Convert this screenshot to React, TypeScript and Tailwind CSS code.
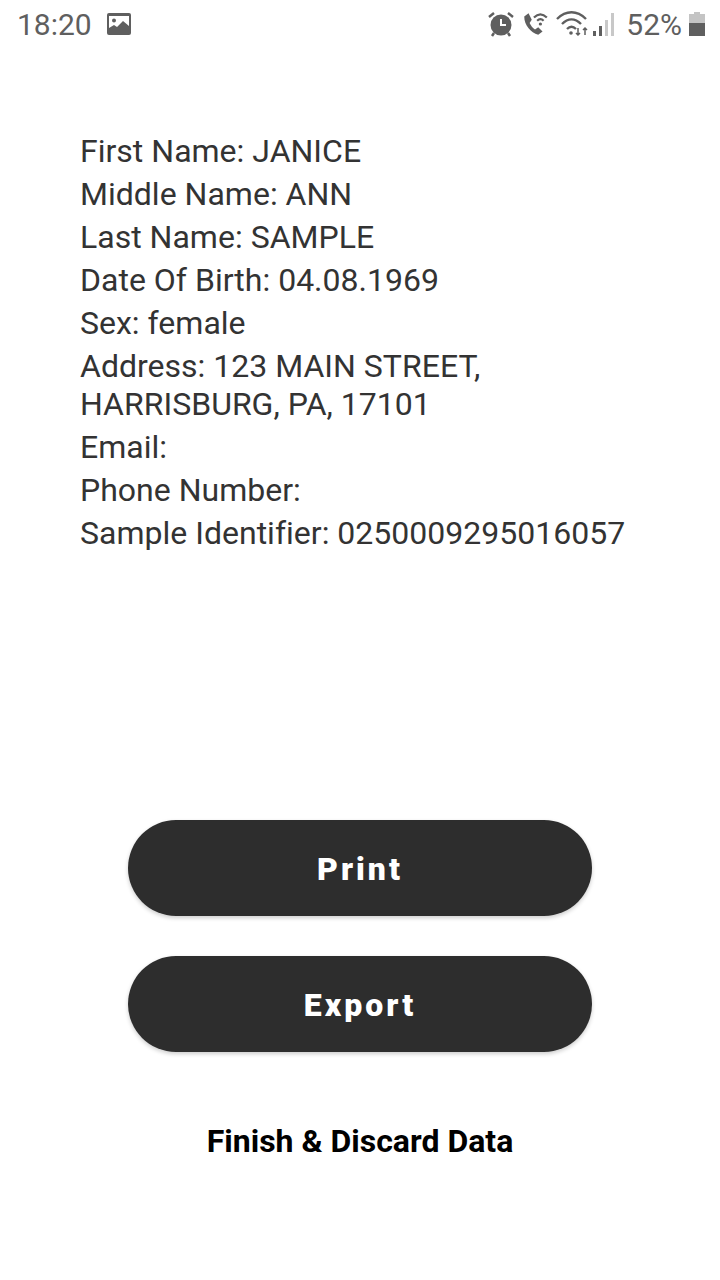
const fields = [
  "First Name: JANICE",
  "Middle Name: ANN",
  "Last Name: SAMPLE",
  "Date Of Birth: 04.08.1969",
  "Sex: female",
  "Address: 123 MAIN STREET, HARRISBURG, PA, 17101",
  "Email:",
  "Phone Number:",
  "Sample Identifier: 0250009295016057",
];

function StatusBar() {
  return (
    <div className="flex h-[50px] items-center justify-between pb-[2px] pl-[17px] pr-[15px] text-[30px] text-[#5f5f5f]">
      <div className="flex items-center gap-[15px]">
        <span>18:20</span>
        <svg width="24" height="22" viewBox="0 0 24 22">
          <rect width="24" height="22" rx="2" fill="#5f5f5f" />
          <rect x="2" y="3" width="20" height="16" fill="#fff" />
          <circle cx="7" cy="7.5" r="2" fill="#5f5f5f" />
          <path d="M2 19v-4l5-3 3 2 6-6 6 5v6z" fill="#5f5f5f" />
        </svg>
      </div>
      <div className="flex items-center">
        <svg width="28" height="26" viewBox="0 0 28 26" className="mr-[6px]" fill="#5f5f5f">
          <circle cx="14" cy="14" r="10.5" />
          <path d="M14 8v6h5" stroke="#fff" strokeWidth="2" fill="none" />
          <path d="M2 6l5-4M26 6l-5-4M7 22l-2 3M21 22l2 3" stroke="#5f5f5f" strokeWidth="2.5" />
        </svg>
        <svg width="28" height="26" viewBox="0 0 26 24" className="mr-[7px]" fill="none" stroke="#5f5f5f">
          <path d="M7 2l-4 3c0 8 6 15 13 17l4-3-4-4-3 2c-2-1-4-4-5-6l2-3z" fill="#5f5f5f" stroke="none" />
          <path d="M12 6c4-4 8-4 12 0M15 9c2-2 4-2 6 0" strokeWidth="2" />
          <circle cx="18" cy="12" r="1.5" fill="#5f5f5f" stroke="none" />
        </svg>
        <svg width="36" height="26" viewBox="0 0 36 26" fill="none" stroke="#5f5f5f" strokeWidth="2.4">
          <path d="M1 8c9-9 20-9 29 0M6 13c6-6 13-6 19 0M11 18c3-3 6-3 9 0" />
          <circle cx="15" cy="22" r="1.8" fill="#5f5f5f" stroke="none" />
          <path d="M22 17v7M20 22l2 2 2-2M29 24v-7M27 19l2-2 2 2" strokeWidth="1.5" />
        </svg>
        <svg width="24" height="26" viewBox="0 0 24 26" className="mr-[10px]">
          <rect x="1" y="20" width="3" height="5" fill="#5f5f5f" />
          <rect x="7" y="15" width="3" height="10" fill="#5f5f5f" />
          <rect x="13" y="9" width="3" height="16" fill="#c8c8c8" />
          <rect x="19" y="2" width="3" height="23" fill="#c8c8c8" />
        </svg>
        <span className="mr-[7px]">52%</span>
        <svg width="16" height="24" viewBox="0 0 16 24">
          <path d="M5 0h6v2h5v22H0V2h5z" fill="#c4c4c4" />
          <rect y="11" width="16" height="13" fill="#5f5f5f" />
        </svg>
      </div>
    </div>
  );
}

function PillButton({ label }: { label: string }) {
  return (
    <button className="h-[96px] w-[464px] rounded-[48px] bg-[#2d2d2d] pt-[1px] text-[32px] font-black tracking-[3px] text-white shadow-[0_2px_4px_rgba(0,0,0,0.2)]">
      {label}
    </button>
  );
}

export default function App() {
  return (
    <div className="flex h-[1280px] w-[720px] flex-col bg-white font-['Roboto',sans-serif]">
      <StatusBar />
      <div className="box-content w-[560px] pl-[80px] pt-[82px] text-[32px] leading-[38px] tracking-[0.01px] text-[#333333]">
        {fields.map((f) => (
          <p key={f} className="mb-[5px]">
            {f}
          </p>
        ))}
      </div>
      <div className="mt-[263px] flex flex-col items-center gap-[40px]">
        <PillButton label="Print" />
        <PillButton label="Export" />
      </div>
      <div className="mt-[70px] text-center text-[32px] font-bold leading-[38px] text-black">
        Finish &amp; Discard Data
      </div>
    </div>
  );
}
